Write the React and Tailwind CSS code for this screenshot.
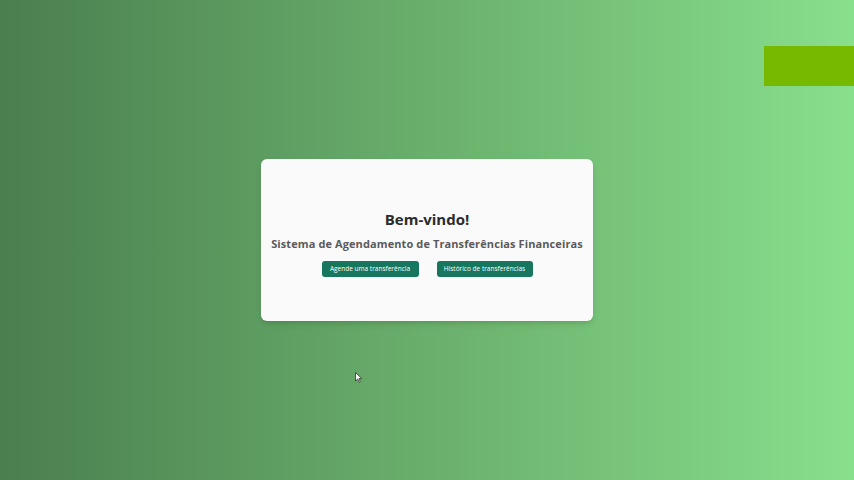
import React from 'react'

function App() {
  return (
    <div className="relative h-screen w-full overflow-hidden bg-gradient-to-r from-[#4a7f4f] via-[#6aaf6c] to-[#88df8c]" style={{ fontFamily: '"Open Sans", "DejaVu Sans", sans-serif' }}>
      <div className="absolute right-0 top-[46px] h-10 w-[90px] bg-[#76b900]" />

      <div className="flex h-full items-center justify-center">
        <div className="flex h-[162px] w-[332px] flex-col items-center rounded-md bg-[#fafafa] pt-[51px] shadow-md">
          <h1 className="whitespace-nowrap text-[15px] font-bold leading-[18px] text-[#2b2b2b]">Bem-vindo!</h1>
          <h2 className="mt-[8px] whitespace-nowrap text-[11px] font-bold leading-[15px] tracking-[0.1px] text-[#5a5a5a]">Sistema de Agendamento de Transferências Financeiras</h2>
          <div className="mt-[10px] flex gap-[18px]">
            <button className="h-4 w-[97px] rounded-[3px] bg-[#16775e] text-[6.5px] leading-none text-white">Agende uma transferência</button>
            <button className="h-4 w-[96px] rounded-[3px] bg-[#16775e] text-[6.5px] leading-none text-white">Histórico de transferências</button>
          </div>
        </div>
      </div>

      <svg className="absolute left-[355px] top-[372px]" width="8" height="11" viewBox="0 0 8 11">
        <path d="M0.5 0.5 L0.5 9 L2.6 7 L4 10.3 L5.3 9.7 L3.9 6.6 L6.8 6.6 Z" fill="#fff" stroke="#333" strokeWidth="0.8" />
      </svg>
    </div>
  )
}

export default App
